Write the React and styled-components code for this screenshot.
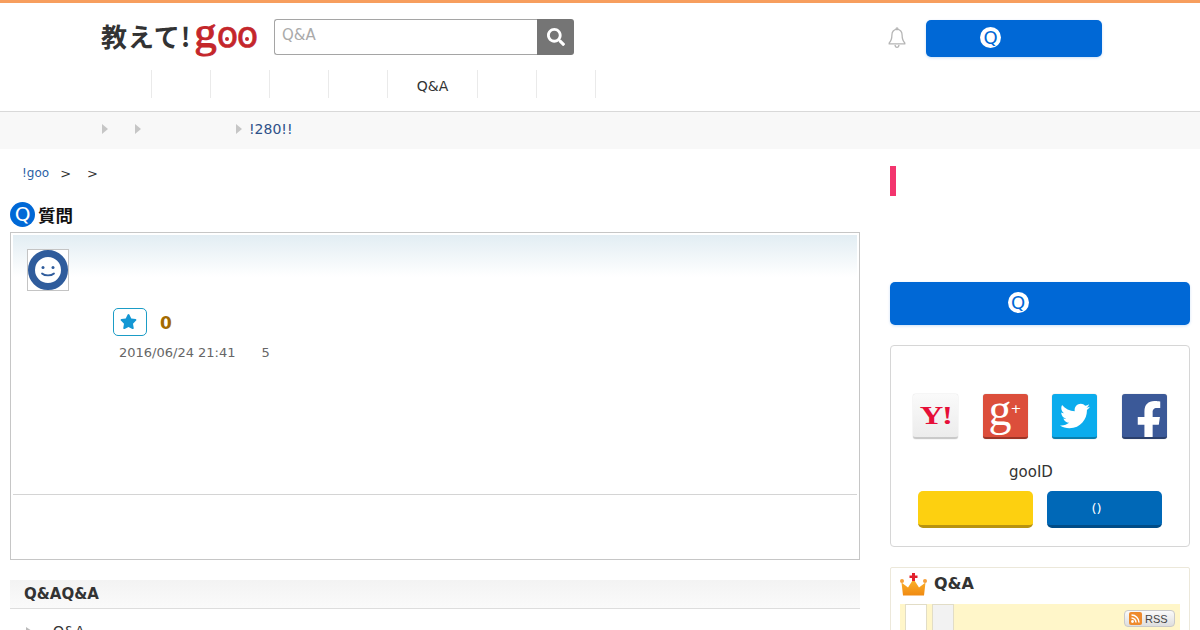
import React from 'react'
import styled, { createGlobalStyle } from 'styled-components'
import { FaSearch, FaStar, FaTwitter, FaFacebookF } from 'react-icons/fa'

const navItems = ['', '', '', '', '', 'Q&A', '', '']
const socials = [
	{ name: 'yahoo', bg: 'linear-gradient(#fafafa, #ececec)', edge: '#c9c9c9' },
	{ name: 'google', bg: '#dc4e3b', edge: '#9c3527' },
	{ name: 'twitter', bg: '#0baced', edge: '#0a7fae' },
	{ name: 'facebook', bg: '#3b5998', edge: '#2a3f6c' },
]

export default function App() {
	return (
		<Page>
			<GlobalStyle />
			<Header>
				<TopRow>
					<Logo>
						<LogoJa>教えて!</LogoJa>
						<LogoG>g</LogoG>
						<LogoO>o</LogoO>
						<LogoO>o</LogoO>
					</Logo>
					<SearchForm>
						<SearchInput>Q&amp;A</SearchInput>
						<SearchButton><FaSearch size={18} /></SearchButton>
					</SearchForm>
					<Bell width="20" height="22" viewBox="0 0 22 24" fill="none" stroke="#b5b5b5" strokeWidth="1.4">
						<path d="M11 2.5c-3.6 0-5.6 2.8-5.6 6.2 0 4.6-1 6.8-3 8.8v1h17.200v-1c-2-2-3-4.200-3-8.800 0-3.400-2-6.200-5.600-6.200z" strokeLinejoin="round" />
						<circle cx="11" cy="1.800" r="1" />
						<path d="M8.800 19.500c.2 1.800 1.100 2.700 2.200 2.700s2-.9 2.200-2.700" />
					</Bell>
					<AskButton $width="176px" $height="37px" $shift="47px">
						<QBadge>Q</QBadge>
					</AskButton>
				</TopRow>
				<Nav>
					{navItems.map((label, i) => (
						<NavItem key={i} $wide={label !== ''}>{label}</NavItem>
					))}
				</Nav>
			</Header>

			<SubBar>
				<Arrow />
				<Arrow />
				<Arrow />
				<SubLink>!280!!</SubLink>
			</SubBar>

			<Main>
				<LeftColumn>
					<Breadcrumb>
						<CrumbLink>!goo</CrumbLink>
						<span>&gt;</span>
						<span>&gt;</span>
					</Breadcrumb>

					<QuestionHeading>
						<HeadingQ>Q</HeadingQ>
						質問
					</QuestionHeading>

					<QuestionBox>
						<QuestionTop>
							<Avatar>
								<svg width="40" height="40" viewBox="0 0 40 40">
									<circle cx="20" cy="20" r="16.500" fill="#fff" stroke="#2f5c9c" strokeWidth="7" />
									<circle cx="15" cy="17.500" r="1.500" fill="#2f5c9c" />
									<circle cx="25" cy="17.500" r="1.500" fill="#2f5c9c" />
									<path d="M14 23.500c3 2.600 9 2.600 12 0" fill="none" stroke="#2f5c9c" strokeWidth="1.800" strokeLinecap="round" />
								</svg>
							</Avatar>
						</QuestionTop>
						<VoteRow>
							<StarButton><FaStar size={17} /></StarButton>
							<VoteCount>0</VoteCount>
						</VoteRow>
						<MetaRow>
							<span>2016/06/24 21:41</span>
							<span>5</span>
						</MetaRow>
						<BoxFooter />
					</QuestionBox>

					<SectionTitle>Q&amp;AQ&amp;A</SectionTitle>
					<RelatedRow>
						<SmallArrow />
						Q&amp;A
					</RelatedRow>
				</LeftColumn>

				<RightColumn>
					<PinkMark />
					<AskButton $width="300px" $height="43px" $shift="44px">
						<QBadge>Q</QBadge>
					</AskButton>

					<LoginCard>
						<SocialRow>
							{socials.map(s => (
								<SocialIcon key={s.name} $bg={s.bg} $edge={s.edge} $clip={s.name === 'facebook'}>
									{s.name === 'yahoo' && <YahooMark>Y!</YahooMark>}
									{s.name === 'google' && <GoogleMark>g<sup>+</sup></GoogleMark>}
									{s.name === 'twitter' && <FaTwitter size={30} color="#fff" />}
									{s.name === 'facebook' && <FacebookMark><FaFacebookF size={42} color="#fff" /></FacebookMark>}
								</SocialIcon>
							))}
						</SocialRow>
						<GooLabel>gooID</GooLabel>
						<LoginButtons>
							<LoginButton $bg="#fdd010" $edge="#b8930f" />
							<LoginButton $bg="#0068b7" $edge="#004c87" $shift="16px">()</LoginButton>
						</LoginButtons>
					</LoginCard>

					<RankingCard>
						<RankingHead>
							<svg width="27" height="24" viewBox="0 0 27 24">
								<defs>
									<linearGradient id="crown" x1="0" y1="0" x2="0" y2="1">
										<stop offset="0" stopColor="#fcb42c" />
										<stop offset="1" stopColor="#f08a12" />
									</linearGradient>
								</defs>
								<path d="M3 22.500 1.500 9.500l6.500 5 5.500-8.500 5.500 8.500 6.500-5L24 22.500z" fill="url(#crown)" />
								<circle cx="2" cy="8" r="2" fill="#f6a03a" />
								<circle cx="25" cy="8" r="2" fill="#f6a03a" />
								<path d="M12 0h3v2.500h2.500v2.500H15v3h-3V5H9.500V2.500H12z" fill="#e2202c" />
							</svg>
							<RankingTitle>Q&amp;A</RankingTitle>
						</RankingHead>
						<TabStrip>
							<Tab $active />
							<Tab />
							<RssBadge>
								<RssIcon width="13" height="13" viewBox="0 0 13 13">
									<rect width="13" height="13" rx="2" fill="#ee8a2c" />
									<circle cx="3.500" cy="9.500" r="1.400" fill="#fff" />
									<path d="M2.500 6a4.500 4.500 0 0 1 4.500 4.500M2.500 3a7.500 7.500 0 0 1 7.500 7.500" fill="none" stroke="#fff" strokeWidth="1.500" />
								</RssIcon>
								RSS
							</RssBadge>
						</TabStrip>
					</RankingCard>
				</RightColumn>
			</Main>
		</Page>
	)
}

const GlobalStyle = createGlobalStyle`
	html, body {
		margin: 0;
		height: 630px;
		overflow: hidden;
		background: #fff;
	}
	* {
		box-sizing: border-box;
	}
`

const Page = styled.div`
	font-family: 'DejaVu Sans', 'Noto Sans CJK JP', sans-serif;
	color: #333;
	width: 1200px;
	height: 630px;
	overflow: hidden;
`

const Header = styled.header`
	border-top: 3px solid #f79e5e;
	border-bottom: 1px solid #d9d9d9;
	height: 112px;
`

const TopRow = styled.div`
	display: flex;
	align-items: flex-start;
	padding: 16px 0 0 101px;
	height: 67px;
`

const Logo = styled.div`
	display: flex;
	align-items: baseline;
	width: 173px;
	height: 36px;
	margin-top: -5px;
	line-height: 36px;
	white-space: nowrap;
`

const LogoJa = styled.span`
	font-family: 'Noto Sans CJK JP', sans-serif;
	font-weight: 700;
	font-size: 26px;
	letter-spacing: 1px;
	color: #333;
`

const LogoG = styled.span`
	font-family: 'Liberation Serif', serif;
	font-weight: 400;
	font-size: 45px;
	-webkit-text-stroke: 1px #c4262b;
	color: #c4262b;
	margin-left: 3px;
`

const LogoO = styled.span`
	position: relative;
	font-family: 'DejaVu Sans', sans-serif;
	font-weight: 400;
	font-size: 35px;
	-webkit-text-stroke: 0.7px #c4262b;
	letter-spacing: -1.500px;
	color: #c4262b;
	&::after {
		content: '';
		position: absolute;
		left: 8px;
		bottom: 12px;
		width: 4px;
		height: 4px;
		border-radius: 50%;
		background: #c4262b;
	}
`

const SearchForm = styled.div`
	display: flex;
	flex: none;
	width: 300px;
	height: 36px;
`

const SearchInput = styled.div`
	flex: 1;
	border: 1px solid #a5a5a5;
	border-right: none;
	border-radius: 3px 0 0 3px;
	padding: 5px 7px;
	font-size: 15px;
	line-height: 20px;
	color: #aaa;
`

const SearchButton = styled.div`
	display: flex;
	align-items: center;
	justify-content: center;
	width: 37px;
	background: #757575;
	color: #fff;
	border-radius: 0 3px 3px 0;
`

const Bell = styled.svg`
	margin: 8px 19px 0 313px;
	flex: none;
`

const AskButton = styled.div`
	display: flex;
	align-items: center;
	justify-content: center;
	width: ${p => p.$width};
	height: ${p => p.$height};
	flex: none;
	background: #0068d6;
	border-radius: 5px;
	box-shadow: 0 1px 3px rgba(0, 104, 214, 0.2);
	margin-top: 1px;
	padding-right: ${p => p.$shift};
`

const QBadge = styled.span`
	display: flex;
	align-items: center;
	justify-content: center;
	width: 21px;
	height: 21px;
	margin-bottom: 2px;
	border-radius: 50%;
	background: #fff;
	color: #0068d6;
	font-size: 18px;
	line-height: 1;
`

const Nav = styled.nav`
	display: flex;
	padding-left: 93px;
	height: 28px;
`

const NavItem = styled.div`
	display: flex;
	align-items: center;
	justify-content: center;
	width: ${p => (p.$wide ? '90px' : '59px')};
	padding-top: 4px;
	border-right: 1px solid #eaeaea;
	font-size: 14px;
	color: #333;
`

const SubBar = styled.div`
	display: flex;
	align-items: center;
	height: 37px;
	padding: 0 0 4px 102px;
	background: #f8f8f8;
`

const Arrow = styled.i`
	flex: none;
	width: 0;
	height: 0;
	border-style: solid;
	border-width: 5px 0 5px 6px;
	border-color: transparent transparent transparent #c6c6c6;
	margin-right: 27px;
	&:nth-child(3) {
		margin-right: 7px;
		margin-left: 68px;
	}
`

const SubLink = styled.a`
	font-size: 14px;
	color: #2e5188;
`

const Main = styled.main`
	display: flex;
	align-items: flex-start;
	padding: 0 10px;
	gap: 30px;
`

const LeftColumn = styled.div`
	width: 850px;
	flex: none;
`

const Breadcrumb = styled.div`
	display: flex;
	align-items: center;
	gap: 16px;
	height: 20px;
	margin-top: 14px;
	padding-left: 12px;
	font-size: 13px;
	color: #333;
`

const CrumbLink = styled.a`
	font-size: 12px;
	margin-right: -5px;
	color: #2a5fa5;
`

const QuestionHeading = styled.h2`
	display: flex;
	align-items: center;
	gap: 3px;
	margin: 18px 0 0;
	height: 26px;
	font-size: 17.500px;
	font-weight: 700;
	color: #111;
`

const HeadingQ = styled.span`
	display: flex;
	align-items: center;
	justify-content: center;
	width: 25px;
	height: 25px;
	border-radius: 50%;
	background: #0068d6;
	color: #fff;
	font-size: 20px;
	font-weight: 400;
`

const QuestionBox = styled.section`
	height: 328px;
	margin-top: 5px;
	padding: 2px;
	border: 1px solid #c6c6c6;
	display: flex;
	flex-direction: column;
`

const QuestionTop = styled.div`
	height: 71px;
	padding: 14px 0 0 14px;
	background: linear-gradient(#e2edf3, #fff 42px);
`

const Avatar = styled.div`
	display: flex;
	align-items: center;
	justify-content: center;
	width: 42px;
	height: 42px;
	border: 1px solid #c4c4c4;
	background: #fff;
`

const VoteRow = styled.div`
	display: flex;
	align-items: center;
	gap: 13px;
	padding-left: 100px;
	margin-top: 2px;
`

const StarButton = styled.div`
	display: flex;
	align-items: center;
	justify-content: center;
	width: 34px;
	height: 28px;
	padding: 0 4px 2px 0;
	border: 1px solid #1b9cc6;
	border-radius: 5px;
	color: #1397d4;
`

const VoteCount = styled.span`
	margin-top: 2px;
	font-size: 17px;
	font-weight: 700;
	color: #a36a00;
`

const MetaRow = styled.div`
	display: flex;
	gap: 26px;
	padding-left: 106px;
	margin-top: 8px;
	height: 17px;
	line-height: 17px;
	font-size: 13px;
	color: #666;
`

const BoxFooter = styled.div`
	margin-top: auto;
	height: 63px;
	border-top: 1px solid #d4d4d4;
`

const SectionTitle = styled.h3`
	margin: 20px 0 0;
	height: 29px;
	padding-left: 14px;
	line-height: 28px;
	font-size: 15px;
	font-weight: 700;
	color: #333;
	background: linear-gradient(#f3f3f3, #fafafa);
	border-bottom: 1px solid #ddd;
`

const RelatedRow = styled.div`
	display: flex;
	align-items: flex-start;
	gap: 21px;
	padding: 14px 0 0 16px;
	font-size: 14px;
	line-height: 17px;
	color: #333;
`

const SmallArrow = styled.i`
	width: 0;
	height: 0;
	border-style: solid;
	border-width: 4px 0 4px 6px;
	border-color: transparent transparent transparent #bbb;
	margin-top: 4px;
`

const RightColumn = styled.aside`
	width: 300px;
	flex: none;
	padding-top: 17px;
`

const PinkMark = styled.div`
	width: 6px;
	height: 30px;
	margin-bottom: 86px;
	background: #f3356e;
`

const LoginCard = styled.section`
	height: 202px;
	margin-top: 20px;
	padding-top: 48px;
	border: 1px solid #d6d6d6;
	border-radius: 4px;
`

const SocialRow = styled.div`
	display: flex;
	gap: 24.500px;
	padding-left: 22px;
`

const SocialIcon = styled.div`
	display: flex;
	align-items: center;
	justify-content: center;
	overflow: ${p => (p.$clip ? 'hidden' : 'visible')};
	width: 45px;
	height: 45px;
	background: ${p => p.$bg};
	border-bottom: 2px solid ${p => p.$edge};
	border-radius: 3px;
	box-shadow: 0 0 1px rgba(0, 0, 0, 0.35);
`

const YahooMark = styled.span`
	display: inline-block;
	font-family: 'Liberation Serif', serif;
	font-weight: 700;
	font-size: 26px;
	letter-spacing: -1px;
	color: #e60f38;
	transform: scaleX(1.25);
`

const GoogleMark = styled.span`
	font-family: 'Liberation Serif', serif;
	font-size: 46px;
	line-height: 36px;
	margin-top: -12px;
	color: #fff;
	sup {
		font-size: 13px;
		font-family: 'DejaVu Sans', sans-serif;
		vertical-align: 12px;
		margin-left: -1px;
	}
`

const FacebookMark = styled.span`
	display: flex;
	margin: 12px 0 0 10px;
`

const GooLabel = styled.div`
	margin-top: 24px;
	padding-right: 18px;
	height: 19px;
	text-align: center;
	font-size: 15px;
	line-height: 19px;
	color: #333;
`

const LoginButtons = styled.div`
	display: flex;
	gap: 14px;
	margin-top: 9px;
	padding-left: 27px;
`

const LoginButton = styled.div`
	display: flex;
	align-items: center;
	justify-content: center;
	width: 115px;
	height: 37px;
	padding-right: ${p => p.$shift || 0};
	font-size: 13px;
	color: #fff;
	background: ${p => p.$bg};
	border-bottom: 3px solid ${p => p.$edge};
	border-radius: 5px;
`

const RankingCard = styled.section`
	height: 80px;
	margin-top: 20px;
	padding: 0 9px;
	border: 1px solid #ece8da;
	border-radius: 2px;
`

const RankingHead = styled.div`
	display: flex;
	align-items: center;
	gap: 7px;
	height: 36px;
	padding-bottom: 3px;
`

const RankingTitle = styled.h4`
	margin: 0 0 3px;
	font-size: 16px;
	font-weight: 700;
	color: #333;
`

const TabStrip = styled.div`
	display: flex;
	align-items: flex-start;
	gap: 5px;
	height: 40px;
	padding-left: 5px;
	background: #fff6c9;
`

const Tab = styled.div`
	width: 22px;
	height: 40px;
	background: ${p => (p.$active ? '#fff' : '#f2f2f2')};
	border: 1px solid #e2ddc6;
	border-bottom: none;
`

const RssBadge = styled.div`
	display: flex;
	align-items: center;
	gap: 3px;
	width: 51px;
	height: 17px;
	margin: 6px 5px 0 auto;
	padding-left: 4px;
	border: 1px solid #c9c9c9;
	border-radius: 4px;
	background: linear-gradient(#fafafa, #dedede);
	font-family: 'Liberation Sans', sans-serif;
	font-size: 11px;
	color: #444;
`

const RssIcon = styled.svg`
	flex: none;
`
